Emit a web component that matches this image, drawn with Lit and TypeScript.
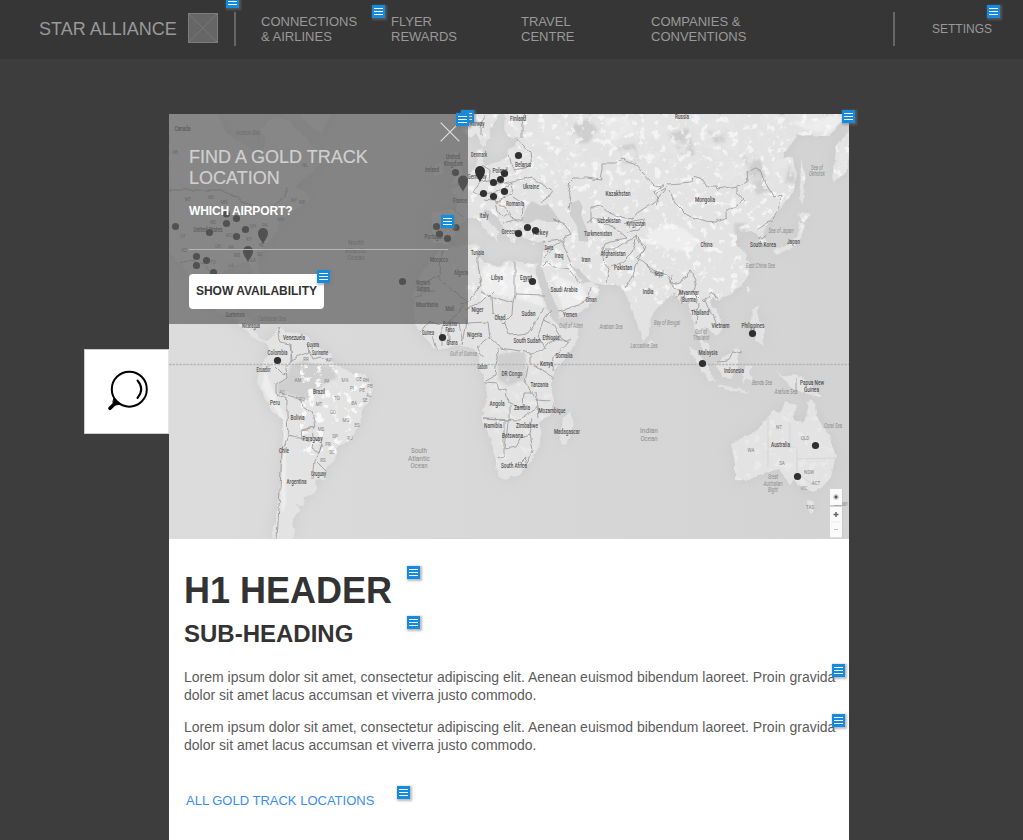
import { LitElement, html, svg, css } from "lit";
import { customElement } from "lit/decorators.js";

type Label = [string, number, number, number?];

/* Country names: text, centre x, baseline y, drawn width */
const countries: Label[] = [
  ["Canada", 182.5, 131, 16], ["United States", 208, 232, 29], ["Guatemala", 235, 317, 19], ["Nicaragua", 251, 328, 18],
  ["United", 453, 158.5, 14], ["Kingdom", 453.5, 166, 19], ["Ireland", 432, 172, 14], ["France", 460, 203, 14], ["Portugal", 433.5, 239, 18],
  ["Morocco", 439, 262, 18], ["Algeria", 461, 275, 14], ["Western", 423, 285, 14], ["Sahara", 423, 291, 13], ["Mauritania", 427, 307, 22],
  ["Mali", 450, 310.5, 9], ["Burkina", 450, 325.5, 14], ["Faso", 450, 331.5, 9], ["Guinea", 428, 335, 12], ["Ghana", 452, 344.5, 11],
  ["Norway", 477, 126, 15], ["Finland", 518, 120.5, 16], ["Denmark", 479, 157, 16], ["Germany", 477, 179, 19], ["Poland", 500, 172.5, 15],
  ["Belarus", 523, 167, 16], ["Ukraine", 531, 189, 16], ["Romania", 515, 206, 18], ["Italy", 484, 218, 9], ["Greece", 509, 234, 15],
  ["Turkey", 540, 235, 16], ["Kazakhstan", 618, 196, 25], ["Uzbekistan", 609, 223, 23], ["Kyrgyzstan", 636, 226, 19],
  ["Turkmenistan", 598, 235.5, 28], ["Afghanistan", 613, 255.5, 25], ["Pakistan", 623, 269.5, 18], ["Iran", 586, 261.5, 9],
  ["Iraq", 559, 258, 9], ["Syria", 549, 250, 9], ["Tunisia", 477.5, 254.5, 13], ["Libya", 497, 279.5, 12], ["Egypt", 526, 279.5, 12],
  ["Saudi Arabia", 564, 291.5, 27], ["Oman", 591, 301.5, 11], ["Yemen", 570, 317, 14], ["Niger", 477.5, 312, 12], ["Chad", 500, 319.5, 11],
  ["Sudan", 528.5, 315.5, 14], ["India", 648, 294, 11], ["Nepal", 659, 276, 9], ["Russia", 682, 118.5, 14], ["Mongolia", 705, 202, 20],
  ["China", 706.5, 247, 12], ["South Korea", 763, 247, 26], ["Japan", 793.5, 244, 13], ["Myanmar", 689, 295, 20], ["(Burma)", 689, 302, 17],
  ["Thailand", 700, 315, 18], ["Vietnam", 720.5, 327.5, 18], ["Philippines", 753, 328, 23], ["Malaysia", 708, 354.5, 19],
  ["Indonesia", 734, 372.5, 20], ["Papua New", 812, 385, 24], ["Guinea", 811.5, 392, 15], ["Australia", 780.5, 446.5, 19],
  ["Nigeria", 474.5, 337, 15], ["South Sudan", 527, 343, 27], ["Ethiopia", 551, 340, 17], ["Somalia", 564, 358, 17], ["Kenya", 546.5, 366, 13],
  ["Gabon", 482.5, 369, 10], ["DR Congo", 512, 376, 21], ["Tanzania", 539.5, 387, 18], ["Angola", 497, 405.5, 15], ["Zambia", 522, 409.5, 16],
  ["Mozambique", 552, 412.5, 27], ["Namibia", 493, 428, 18], ["Zimbabwe", 527, 427.5, 22], ["Botswana", 512.5, 437.5, 21],
  ["Madagascar", 567, 434, 26], ["South Africa", 514, 467.5, 26], ["Venezuela", 294, 340, 22], ["Guyana", 313, 346.5, 12],
  ["Suriname", 320, 354.5, 16], ["Colombia", 277.5, 355, 20], ["Ecuador", 263.5, 371.5, 14], ["Brazil", 319, 393.5, 12], ["Peru", 275, 404.5, 10],
  ["Bolivia", 297.5, 420, 14], ["Paraguay", 312.5, 441, 20], ["Chile", 284, 453, 10], ["Uruguay", 318.5, 475.5, 15], ["Argentina", 296.5, 483.5, 20],
];

const waters: Label[] = [
  ["Hudson Bay", 248, 134.5, 24], ["Caribbean Sea", 272, 321, 28], ["Sea of", 817, 169.5, 12], ["Okhotsk", 817, 176, 16],
  ["Sea of Japan", 781, 232.5, 25], ["East China Sea", 760.5, 268, 29], ["Bay of Bengal", 667, 324.5, 26], ["Gulf of", 701, 333.5, 12],
  ["Thailand", 701, 340, 16], ["Banda Sea", 762, 384.5, 20], ["Arafura Sea", 786, 394, 23], ["Coral Sea", 833, 428, 18],
  ["Great", 773, 479, 10], ["Australian", 773, 485.5, 19], ["Bight", 773, 492, 10], ["Gulf of Aden", 571, 327.5, 24],
  ["Arabian Sea", 611, 329, 23], ["Laccadive Sea", 644, 347.5, 27], ["Gulf of Guinea", 463.5, 355.5, 27], ["Tasman", 840, 506, 15],
];

const oceans: Label[] = [
  ["North", 356, 244.5, 16], ["Atlantic", 356, 252.5, 22], ["Ocean", 356, 260, 17],
  ["South", 419, 453, 16], ["Atlantic", 419, 460.5, 22], ["Ocean", 419, 468, 17],
  ["Indian", 649, 433, 18], ["Ocean", 649, 441, 17],
];

const regions: [string, number, number][] = [
  ["AM", 298, 381.5], ["PA", 327, 383], ["MA", 345, 381.5], ["CE", 359, 381], ["RN", 366, 382], ["PB", 370, 388], ["PE", 362, 392],
  ["AL", 369, 396.5], ["SE", 365, 402], ["PI", 352, 390], ["TO", 337, 400], ["BA", 354, 404.5], ["RO", 302, 400.5], ["MT", 319, 406],
  ["GO", 333, 414], ["MG", 346, 421.5], ["ES", 357, 427], ["MS", 321, 431], ["SP", 335, 437.5], ["RJ", 350, 439.5], ["PR", 328, 445.5],
  ["SC", 332, 454], ["RS", 323, 462], ["RR", 306, 361], ["AP", 329, 361.5], ["AC", 282, 394], ["NT", 779, 428.5], ["QLD", 805, 439.5],
  ["WA", 751, 452], ["SA", 782, 464.5], ["NSW", 809, 473.5], ["ACT", 816, 485], ["VIC", 804, 490], ["TAS", 810, 509],
  ["MT", 188, 201], ["ND", 211, 198.5], ["MN", 224, 204], ["NE", 213, 224], ["NY", 294, 202], ["ME", 302, 204],
  ["MA", 281, 221], ["OH", 253, 228], ["PA", 265, 227], ["KY", 249, 241], ["MO", 229, 237],
  ["OK", 218, 248], ["AR", 231, 249], ["TX", 213, 264], ["MS", 237, 257], ["GA", 253, 262], ["LA", 231, 267], ["AZ", 184, 252],
  ["UT", 183, 238], ["NC", 262, 247], ["SC", 260, 256], ["AB", 175, 154], ["NL", 305, 167],
];

const dots: [number, number][] = [
  [175.5, 226.5], [209.5, 232.5], [226.5, 214], [236.5, 218.5], [226.5, 223.5], [245.5, 229.5], [236.5, 236.5], [196.5, 256.5],
  [206.5, 260.5], [196.5, 265.5], [213.5, 272.5], [402.5, 281.5], [455.5, 172.5], [436.5, 226.5], [456, 227.5], [439.5, 234], [447.5, 238.5],
  [518.5, 155.5], [504.5, 173.5], [500.5, 179.5], [493.5, 182.5], [483.5, 193.5], [493.5, 196.5], [504.5, 191.5],
  [527.5, 227.5], [535.5, 230.5], [518.5, 233.5], [532.5, 281.5], [277.5, 360.5], [442.5, 337.5], [752.5, 333.5], [702.5, 363.5],
  [815.5, 445.5], [797.5, 476.5],
];

const pins: [number, number][] = [[263, 234], [248, 252], [463, 181.5], [480, 172]];

const land = [
  // Eurasia
  "M505 114L504 128L509 137L520 138L516 145L508 150L507 157L497 162L484 166L482 158L485 154L483 148L476 151L478 160L474 169L465 178L459 186L450 190L457 196L456 209L434 211L431 217L433 231L428 236L434 244L446 244L454 237L460 226L468 219L476 217L484 228L493 238L497 242L499 232L491 224L483 213L485 209L496 216L503 224L507 237L514 243L517 238L513 231L521 228L524 238L536 242L545 240L543 255L541 267L548 287L558 309L560 319L582 312L595 300L600 290L592 282L582 283L572 267L580 270L592 282L605 285L618 285L627 297L632 310L638 327L643 342L649 335L650 319L660 305L668 299L675 291L680 303L688 303L692 317L696 331L703 350L710 358L708 344L702 338L704 327L711 330L716 336L723 328L719 315L710 303L713 297L719 300L727 296L740 287L748 275L750 265L744 251L735 242L743 234L751 231L757 234L760 246L767 244L763 231L773 217L782 207L794 191L797 173L792 157L783 158L788 147L798 135L829 136L849 114Z",
  // Africa
  "M440 250L430 262L420 275L413 292L414 312L415 324L420 332L428 341L437 350L448 347L461 345L472 348L480 357L478 366L485 381L487 393L483 420L490 437L495 457L500 478L506 480L520 475L532 460L540 443L541 433L538 423L553 413L553 400L551 384L555 370L567 357L577 340L579 323L565 328L557 325L546 307L540 287L535 268L539 263L532 264L515 261L506 260L500 267L485 263L479 256L480 245L472 244L455 246Z",
  // South America
  "M252 319L248 326L257 335L265 340L271 338L280 327L287 332L305 334L312 342L322 350L330 354L334 364L349 371L364 375L372 383L371 396L363 408L360 424L351 439L338 447L335 458L326 470L325 479L314 481L317 490L312 495L305 497L303 505L297 504L299 511L293 520L295 533L291 539L272 539L276 515L280 493L282 468L284 430L283 419L271 410L261 390L258 382L260 370L265 360L268 347L263 341L253 337L245 329L236 323L242 315Z",
  // North America
  "M169 114H218L224 130L236 139L251 149L254 159L261 154L266 142L261 128L272 117L290 121L304 137L315 150L320 164L306 178L294 187L306 191L310 200L299 207L289 213L280 222L276 232L269 241L263 250L257 261L261 278L255 276L248 263L233 265L220 276L218 294L224 301L235 301L236 310L246 314L242 321L222 315L204 300L192 280L181 264L169 252Z",
  "M300 114H330L322 134L310 126Z",
  // Scandinavia and the British Isles
  "M465 114L462 131L471 138L476 133L483 147L489 140L492 126L498 114Z",
  "M450 152L457 151L462 170L467 178L452 184L456 174L448 164ZM435 165L442 162L443 173L434 177Z",
  // Australia
  "M741 439L757 431L765 420L774 410L780 413L784 402L796 405L793 417L803 424L806 417L810 398L816 408L819 421L828 431L832 445L836 456L831 477L821 488L813 491L806 491L798 484L794 480L789 484L779 469L758 475L748 481L735 480L735 463L730 445Z",
  "M807 501L815 501L813 512L809 514Z",
  // Islands
  "M570 411L574 425L567 445L561 444L560 430L563 419Z",
  "M688 347L697 351L708 365L715 382L710 381L701 370Z",
  "M715 365L722 358L736 348L740 352L736 371L731 379L722 377Z",
  "M717 384L731 387L750 392L741 393L719 387Z",
  "M744 367L755 366L749 371L753 382L747 378L744 383L742 373Z",
  "M775 371L783 377L793 374L808 381L821 397L807 394L793 389Z",
  "M753 309L759 305L758 318L765 329L762 347L755 339L755 329L749 327Z",
  "M745 288L749 286L749 293Z", "M773 251L782 247L793 243L798 232L799 221L804 224L801 239L792 247L777 255Z",
  "M797 216L802 211L812 215L803 222Z", "M801 160L805 174L804 204L800 201Z", "M849 132L836 146L833 182L846 173L849 155Z",
  "M650 339L653 343L651 348L649 344Z", "M530 245L536 243L534 246Z",
].join("");

const seas = [
  "M523 217L526 208L532 201L541 206L548 204L561 222L547 222L537 219L528 224L522 223Z",
  "M571 203L579 200L583 207L581 215L588 232L588 242L579 241L577 226L570 215Z",
  "M542 267L548 287L558 311L555 315L546 304L538 278Z",
].join("");

const dark = [
  "M291 365L303 361L319 365L333 366L337 378L324 384L307 400L289 394L277 393L277 384L286 379Z",
  "M497 355L514 351L525 352L527 370L524 380L508 386L498 379Z",
  "M707 130L728 128L727 143L715 143ZM669 134L688 128L695 155L681 156ZM743 157L756 150L764 169L756 181L745 173Z",
  "M748 173L763 169L770 190L757 195ZM566 125L588 119L598 130L588 143L573 143ZM617 147L634 143L640 160L624 164Z",
  "M734 223L746 223L744 244L735 240ZM789 165L796 173L794 183L785 183Z",
].join("");

const pale = [
  "M603 118L626 116L637 134L625 132L615 142ZM645 235L665 224L683 228L699 241L690 252L666 248L653 243Z",
  "M483 266L515 267L537 276L544 307L519 299L481 292ZM551 273L582 287L589 301L563 309Z",
  "M265 370L280 407L286 419L286 504L282 515L280 480L281 419L262 387ZM790 122L848 115L828 134L805 129Z",
].join("");

const borders = [
  // Africa
  "M478 252L478 264L481 285L469 302L460 304M481 291L493 297L513 303L515 295V262M515 294L545 295M513 303L512 315L504 323L492 313L491 297M465 310L481 303L493 291",
  "M545 307L537 320L528 333L509 335L505 322M466 320L462 345M467 323L488 322L490 338L477 348L484 357M490 338L501 348L520 351L530 353L544 350L552 340L571 340M551 311L543 322L538 336L546 350",
  "M543 320L554 325L561 338L568 342L559 352L554 355L553 371M530 353V363L538 368L553 378M528 367L525 382L536 400L551 401M498 349L495 376L484 382M485 383L497 384L499 390L507 388L509 404L523 408L524 392L533 392",
  "M484 419L510 421L510 406M484 419L520 420L537 408L535 392M504 421V456L497 458M508 422L505 449L515 447L521 437L530 434L533 418M530 434L533 451L525 465M520 463L526 457L524 466L519 463M538 405L539 418",
  "M435 291L421 292L421 297L413 297M436 274L441 281L467 302L448 323M450 322L459 323L463 344M420 333L430 321L442 325V347M449 325V346M433 335L437 350M439 276L423 283M440 275L441 251",
  // South America
  "M280 327L277 334L280 342L290 344L292 360L286 369L287 377L276 384V393L287 400L287 415L288 436L282 450L280 490L277 539M291 344L291 362L299 356L309 352L307 343M309 350L313 359L321 357L328 360",
  "M282 394L293 397L301 400L302 406L312 413L315 427L302 430L303 439L293 436L288 435M302 429L313 426L314 438L322 444L319 453L312 449L313 443L303 439M323 445L314 461L312 479M317 462L326 471M264 369L273 364L282 373L287 374",
  // Europe
  "M485 114L481 127L481 136M525 114L522 123L522 138M517 140L524 146L530 153L532 166L515 170L511 163L509 154M482 165L490 170L489 181L499 185L513 181L532 177L541 183L552 190L548 198L541 203",
  "M489 181L480 182L473 191L480 195L491 194L504 188L513 182L512 194L499 201L485 199M513 197L524 204L523 221L511 217L505 207L494 201M495 202L497 211L502 218L508 214M503 223L514 220L521 222M453 209L464 219",
  "M560 221L553 219L565 224L571 234L564 237L562 245L568 257L573 268M543 242L562 240M544 249L552 248L562 241M542 266L547 261L556 267L569 269M544 257L554 249M570 271L581 284M558 311L567 309L579 304L589 297L591 286",
  // Central Asia and Asia
  "M569 210L571 195L568 184L574 178L587 178L601 180L603 170L603 163L615 163L623 159L635 164L641 171L655 186L664 185L655 192L657 199L648 206L637 213L632 219L622 217L612 214L603 206L591 207L591 223",
  "M587 223L594 217L603 224L616 229L626 238L616 240L605 244L602 252L604 263L609 269L606 283M605 249L615 249L625 242L637 237L632 252L622 262L610 267M623 224L632 221L645 219L639 230L627 233M638 238L646 247L640 257L633 275L625 288",
  "M638 239L645 250L637 257L644 263L653 270L667 275L672 284L680 282L690 270L696 280L693 291L704 302L712 291L718 298M646 264L650 270L662 277M671 275L672 286L681 291L677 297M656 194L665 189L669 184L681 183L692 182L693 176L703 179L707 186L716 186L717 189L731 187L741 185L748 182L747 173L755 168L762 171L766 184L773 196L782 194L779 207L773 219L757 230",
  "M669 190L676 204L687 215L705 221L715 222L726 217L726 210L738 205L745 200L736 192L736 185M665 190L655 203M698 304L696 324M704 299L713 316L717 326M717 299L714 293M717 362L728 361L733 350L741 352",
  "M797 371V394M759 239L767 234",
  // North America
  "M169 190H222L239 199L252 205L258 212L270 209L280 201L288 187M181 263L192 260L204 264L216 280M238 302L229 309",
].join("");

const stateLines = "M768 415V467M768 447H797M790 422V448M797 448V475M797 459L835 458M797 474L814 485";

const renderLabels = (items: Label[], cls: string) =>
  items.map(([t, x, y, w]) => svg`<text class=${cls} x=${x} y=${y} textLength=${w ?? 15} lengthAdjust="spacingAndGlyphs">${t}</text>`);

@customElement("note-marker")
export class NoteMarker extends LitElement {
  static styles = css`
    :host { display: block; width: 13px; height: 13px; background: #158be0; box-shadow: 1px 1px 2px 1px rgba(120, 120, 120, 0.5); }
    .lines { display: block; }
  `;
  render() {
    return html`<svg class="lines" width="13" height="13" viewBox="0 0 13 13"><path d="M2 3.5H11M2 6.5H11M2 9.5H11" stroke="#fff" stroke-width="1"/></svg>`;
  }
}

@customElement("world-map")
export class WorldMap extends LitElement {
  static styles = css`
    :host { display: block; width: 680px; height: 425px; }
    .map { display: block; }
    text { font-family: Roboto, "Liberation Sans", sans-serif; text-anchor: middle; }
    .country { font-size: 6.8px; font-weight: 500; fill: #505050; }
    .water { font-size: 6.5px; font-style: italic; fill: #8b8b8b; }
    .ocean { font-size: 6.8px; fill: #8b8b8b; }
    .region { font-size: 4.5px; fill: #828282; }
  `;
  render() {
    return html`<svg class="map" width="680" height="425" viewBox="169 114 680 425">
      <defs>
        <linearGradient id="sea" x1="0" x2="1"><stop offset="0" stop-color="#dcdcdc"/><stop offset="1" stop-color="#d3d3d3"/></linearGradient>
        <filter id="soft" x="-5%" y="-5%" width="110%" height="110%"><feGaussianBlur stdDeviation="7"/></filter>
        <filter id="edge"><feGaussianBlur stdDeviation="1.2"/></filter>
        <filter id="rough" x="0" y="0" width="100%" height="100%"><feTurbulence type="fractalNoise" baseFrequency="0.14" numOctaves="3" seed="4"/><feDisplacementMap in="SourceGraphic" scale="5" xChannelSelector="R" yChannelSelector="G"/></filter>
        <filter id="wander" x="0" y="0" width="100%" height="100%"><feTurbulence type="fractalNoise" baseFrequency="0.1" numOctaves="2" seed="4"/><feDisplacementMap in="SourceGraphic" scale="5" xChannelSelector="R" yChannelSelector="G"/></filter>
        <filter id="snow" x="0" y="0" width="100%" height="100%"><feTurbulence type="fractalNoise" baseFrequency="0.13" numOctaves="5" seed="8"/><feColorMatrix values="0 0 0 0 .95  0 0 0 0 .95  0 0 0 0 .95  9 0 0 0 -5.2"/></filter>
        <filter id="forest" x="0" y="0" width="100%" height="100%"><feTurbulence type="fractalNoise" baseFrequency="0.05" numOctaves="5" seed="21"/><feColorMatrix values="0 0 0 0 .8  0 0 0 0 .8  0 0 0 0 .8  0 5 0 0 -2.2"/></filter>
        <clipPath id="ground"><path d=${land}/></clipPath>
      </defs>
      <rect x="169" y="114" width="680" height="425" fill="url(#sea)"/>
      <path d=${land} fill="#c2c2c2" opacity=".6" filter="url(#soft)"/>
      <path d=${land} fill="#e3e3e3" filter="url(#rough)"/>
      <g clip-path="url(#ground)">
        <path d=${dark} fill="#cacaca" opacity=".8" filter="url(#edge)"/>
        <path d=${pale} fill="#f1f1f1" opacity=".8" filter="url(#edge)"/>
        <rect x="169" y="114" width="300" height="210" filter="url(#forest)" opacity=".3"/>
        <rect x="465" y="114" width="384" height="75" filter="url(#forest)" opacity=".8"/>
        <rect x="465" y="114" width="384" height="190" filter="url(#snow)" opacity=".7"/>
        <rect x="300" y="365" width="75" height="90" filter="url(#snow)"/>
        <rect x="480" y="350" width="80" height="120" filter="url(#snow)" opacity=".3"/>
        <rect x="730" y="395" width="110" height="100" filter="url(#snow)" opacity=".3"/>
      </g>
      <path d=${seas} fill="#cecece"/>
      <path d=${borders} fill="none" stroke="#999" stroke-width=".85" stroke-linejoin="round" filter="url(#wander)"/>
      <path d=${stateLines} fill="none" stroke="#cfcfcf" stroke-width=".6"/>
      <path d="M169 364.500H849" stroke="#b7b7b7" stroke-width="1.300" stroke-dasharray="2.500 1"/>
      ${renderLabels(waters, "water")}${renderLabels(oceans, "ocean")}
      ${regions.map(([t, x, y]) => svg`<text class="region" x=${x} y=${y}>${t}</text>`)}
      ${renderLabels(countries, "country")}
      ${dots.map(([x, y]) => svg`<circle cx=${x} cy=${y} r="3.6" fill="#303030"/>`)}
      ${pins.map(([x, y]) => svg`<path d="M0 10.5C-1 6.5-5 4-5-1A5 5 0 0 1 5-1C5 4 1 6.500 0 10.500Z" transform="translate(${x} ${y})" fill="#303030"/>`)}
      <g>
        <path d="M830 490H842.500V505.500H830ZM830 507.500H842.500V538H830Z" fill="#999" opacity=".35"/>
        <path d="M830 489H842V505H830ZM830 507H842V537.500H830Z" fill="#fafafa"/>
        <circle cx="836" cy="497" r="1.700" fill="#555"/><circle cx="836" cy="497" r="2.600" fill="none" stroke="#bbb" stroke-width=".6"/>
        <path d="M833.500 514.500H838.500M836 512V517" stroke="#666" stroke-width="1.500"/><path d="M831 522H841" stroke="#e6e6e6" stroke-width=".7"/><path d="M834 529.500H838" stroke="#c4c4c4" stroke-width="1"/>
      </g>
    </svg>`;
  }
}

@customElement("app-root")
export class AppRoot extends LitElement {
  static styles = css`
    :host { display: block; position: relative; width: 1023px; height: 840px; overflow: hidden; background: #3d3d3d; font-family: "Liberation Sans", Arial, sans-serif; }
    * { box-sizing: border-box; }
    .header { display: flex; align-items: center; height: 59px; padding: 0 31px 2px 39px; background: #363636; color: #999; }
    .brand { width: 149px; padding-top: 1px; font-size: 18px; white-space: nowrap; }
    .logo { display: block; margin-bottom: 2px; }
    .rule { width: 2px; height: 34px; margin-left: 16px; background: #666; }
    .nav { display: flex; margin-left: 25px; font-size: 13px; line-height: 15px; }
    .item { width: 130px; white-space: nowrap; }
    .right { display: flex; align-items: center; margin-left: auto; gap: 37px; font-size: 12px; }
    .right .rule { margin: 0; }
    .main { display: grid; grid-template-columns: 85px 680px; padding: 55px 0 0 84px; }
    .search { display: grid; place-items: center; width: 85px; height: 85px; margin-top: 235px; background: #fff; border: 1px solid #ccc; border-right-color: #e5e5e5; }
    .page { height: 726px; background: #fff; }
    .hero { display: grid; height: 425px; }
    .hero > * { grid-area: 1 / 1; }
    .panel { z-index: 1; width: 299px; height: 210px; padding: 33px 20px 0; background: rgba(96, 96, 96, 0.7); display: grid; grid-template-rows: 42px 30px 31px 24px 35px; }
    .title { margin: 0; font-size: 18px; line-height: 21px; font-weight: 400; color: #d0d0d0; -webkit-text-stroke: 0.2px #d0d0d0; white-space: nowrap; }
    .ask { font-size: 12px; line-height: 14px; padding-top: 15px; color: #fff; font-weight: 700; letter-spacing: -0.1px; }
    .field { border-bottom: 1px solid #b8b8b8; }
    .button { grid-row: 5; width: 135px; height: 35px; padding: 0 0 2px; border: 0; border-radius: 4px; background: #fff; color: #333; font: bold 12px "Liberation Sans", Arial, sans-serif; white-space: nowrap; }
    .close { position: absolute; left: 440px; top: 122px; z-index: 2; }
    .copy { padding: 31px 0 0 15px; color: #666; }
    .h1 { margin: 0; font-size: 36px; line-height: 42px; color: #333; }
    .h2 { margin: 7px 0 19px; font-size: 24px; line-height: 30px; color: #333; }
    .text { margin: 0 0 14px; font-size: 14px; line-height: 18px; color: #5c5c5c; white-space: nowrap; }
    .link { display: block; padding: 25px 0 0 2px; font-size: 13px; line-height: 15px; color: #3a8ef0; }
    .note { position: absolute; z-index: 3; }
    .n0 { left: 226px; top: -5px; } .n1 { left: 372px; top: 5px; } .n2 { left: 987px; top: 5px; }
    .n3 { left: 461px; top: 110px; } .n4 { left: 456px; top: 113px; } .n5 { left: 441px; top: 215px; }
    .n6 { left: 317px; top: 270px; } .n7 { left: 842px; top: 110px; } .n8 { left: 407px; top: 566px; }
    .n9 { left: 407px; top: 616px; } .n10 { left: 832px; top: 664px; } .n11 { left: 832px; top: 714px; } .n12 { left: 397px; top: 786px; }
  `;
  render() {
    const text = html`Lorem ipsum dolor sit amet, consectetur adipiscing elit. Aenean euismod bibendum laoreet. Proin gravida<br>dolor sit amet lacus accumsan et viverra justo commodo.`;
    return html`
      <header class="header">
        <div class="brand">STAR ALLIANCE</div>
        <svg class="logo" width="30" height="30" viewBox="0 0 30 30"><rect x=".5" y=".5" width="29" height="29" fill="#666" stroke="#7c7c7c"/><path d="M1 1L29 29M29 1L1 29" stroke="#7c7777" stroke-width=".8"/></svg>
        <div class="rule"></div>
        <nav class="nav">
          <div class="item">CONNECTIONS<br>&amp; AIRLINES</div><div class="item">FLYER<br>REWARDS</div>
          <div class="item">TRAVEL<br>CENTRE</div><div class="item">COMPANIES &amp;<br>CONVENTIONS</div>
        </nav>
        <div class="right"><div class="rule"></div><div>SETTINGS</div></div>
      </header>
      <main class="main">
        <div class="search"><svg width="83" height="83" viewBox="85 350 83 83" fill="none" stroke="#000" stroke-linecap="round">
          <circle cx="129.300" cy="389.200" r="17.500" stroke-width="2"/><path d="M137.500 380.500Q145 389 137.500 398" stroke-width="2"/>
          <path d="M116 402.500L110 408.300" stroke-width="3.600"/><path d="M114 399L121 404L117 404.800L113.500 405L113 402Z" fill="#000" stroke="#000" stroke-width="1" stroke-linejoin="round"/></svg></div>
        <section class="page">
          <div class="hero">
            <world-map></world-map>
            <div class="panel">
              <h3 class="title">FIND A GOLD TRACK<br>LOCATION</h3>
              <div class="ask">WHICH AIRPORT?</div>
              <div class="field"></div>
              <button class="button">SHOW AVAILABILITY</button>
            </div>
          </div>
          <div class="copy">
            <h1 class="h1">H1 HEADER</h1><h2 class="h2">SUB-HEADING</h2>
            <p class="text">${text}</p><p class="text">${text}</p>
            <a class="link">ALL GOLD TRACK LOCATIONS</a>
          </div>
        </section>
      </main>
      <svg class="close" width="20" height="20" viewBox="0 0 20 20"><path d="M.7.700L19.300 19.300M19.300.7L.7 19.300" stroke="#ddd" stroke-width="1.200"/></svg>
      ${Array.from({ length: 13 }, (_, i) => html`<note-marker class="note n${i}"></note-marker>`)}
    `;
  }
}
